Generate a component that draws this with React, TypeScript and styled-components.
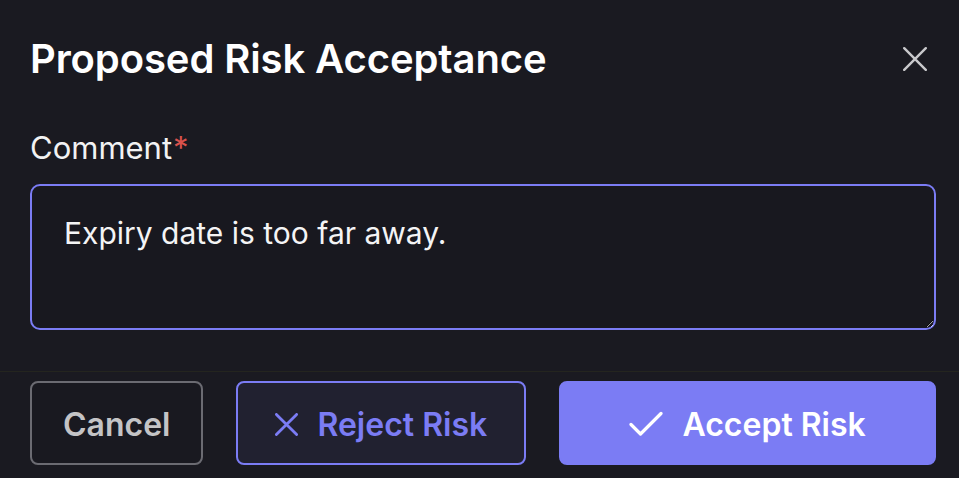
import React from "react";
import styled, { createGlobalStyle } from "styled-components";

const Global = createGlobalStyle`
  html, body { margin: 0; padding: 0; background: #1a1a21; }
  body { font-family: Inter, "Noto Sans", sans-serif; color: #f4f4f5; }
  * { box-sizing: border-box; }
`;

const Dialog = styled.div`
  width: 959px;
  height: 478px;
  background: #1a1a21;
  display: flex;
  flex-direction: column;
  overflow: hidden;
`;

const Header = styled.div`
  display: flex;
  align-items: center;
  justify-content: space-between;
  padding: 36px 23px 0 30px;
  height: 82px;
`;

const Title = styled.h1`
  margin: 0;
  font-size: 40px;
  line-height: 46px;
  font-weight: 600;
  color: #ffffff;
  letter-spacing: -0.1px;
`;

const CloseButton = styled.button`
  background: none;
  border: none;
  padding: 0;
  margin-right: 6px;
  width: 30px;
  height: 30px;
  display: flex;
  align-items: center;
  justify-content: center;
  color: #c9c9cc;
  cursor: pointer;
`;

const Body = styled.div`
  padding: 47px 23px 0 30px;
  display: flex;
  flex-direction: column;
`;

const Label = styled.label`
  font-size: 31px;
  line-height: 38px;
  font-weight: 400;
  color: #f2f2f3;
  margin-bottom: 17px;
`;

const Required = styled.span`
  color: #d9524c;
  margin-left: 1px;
`;

const TextArea = styled.textarea`
  width: 100%;
  height: 146px;
  background: #18181f;
  border: 2px solid #7b7cf4;
  border-radius: 10px;
  padding: 28px 32px 24px;
  font-family: Inter, "Noto Sans", sans-serif;
  font-size: 30px;
  line-height: 38px;
  color: #f4f4f5;
  outline: none;
  resize: vertical;
  color-scheme: dark;
`;

const Divider = styled.div`
  margin-top: 41px;
  height: 1px;
  background: #24251f;
`;

const Footer = styled.div`
  display: flex;
  gap: 33px;
  padding: 9px 23px 0 30px;
`;

const Button = styled.button<{ $variant: "ghost" | "outline" | "primary"; $grow?: boolean }>`
  height: 84px;
  border-radius: 8px;
  font-family: Inter, "Noto Sans", sans-serif;
  font-size: 32px;
  font-weight: 600;
  display: flex;
  align-items: center;
  justify-content: center;
  gap: 19px;
  cursor: pointer;
  flex: ${(p) => (p.$grow ? "1" : "none")};
  padding: 2px ${(p) => (p.$variant === "ghost" ? "31px" : "37px")} 0;
  border: 2px solid
    ${(p) =>
      p.$variant === "ghost" ? "#6b6b72" : p.$variant === "outline" ? "#7b7cf4" : "#7b7cf4"};
  background: ${(p) =>
    p.$variant === "ghost" ? "#191920" : p.$variant === "outline" ? "#212130" : "#7b7cf4"};
  color: ${(p) =>
    p.$variant === "ghost" ? "#c4c4c6" : p.$variant === "outline" ? "#7b7cf4" : "#ffffff"};
`;

const XIcon = ({ size, stroke }: { size: number; stroke: number }) => (
  <svg width={size} height={size} viewBox={`0 0 ${size} ${size}`} fill="none">
    <path
      d={`M${stroke / 2} ${stroke / 2} L${size - stroke / 2} ${size - stroke / 2} M${size - stroke / 2} ${stroke / 2} L${stroke / 2} ${size - stroke / 2}`}
      stroke="currentColor"
      strokeWidth={stroke}
      strokeLinecap="round"
    />
  </svg>
);

const CheckIcon = () => (
  <svg width="34" height="26" viewBox="0 0 34 26" fill="none">
    <path d="M2 13.5 L11.5 23 L32 2.5" stroke="currentColor" strokeWidth="3.2" strokeLinecap="round" strokeLinejoin="round" />
  </svg>
);

export default function App() {
  return (
    <>
      <Global />
      <Dialog>
        <Header>
          <Title>Proposed Risk Acceptance</Title>
          <CloseButton aria-label="Close">
            <XIcon size={24} stroke={2.4} />
          </CloseButton>
        </Header>
        <Body>
          <Label>
            Comment<Required>*</Required>
          </Label>
          <TextArea defaultValue="Expiry date is too far away." />
        </Body>
        <Divider />
        <Footer>
          <Button $variant="ghost">Cancel</Button>
          <Button $variant="outline">
            <XIcon size={23} stroke={2.8} />
            Reject Risk
          </Button>
          <Button $variant="primary" $grow>
            <CheckIcon />
            Accept Risk
          </Button>
        </Footer>
      </Dialog>
    </>
  );
}
